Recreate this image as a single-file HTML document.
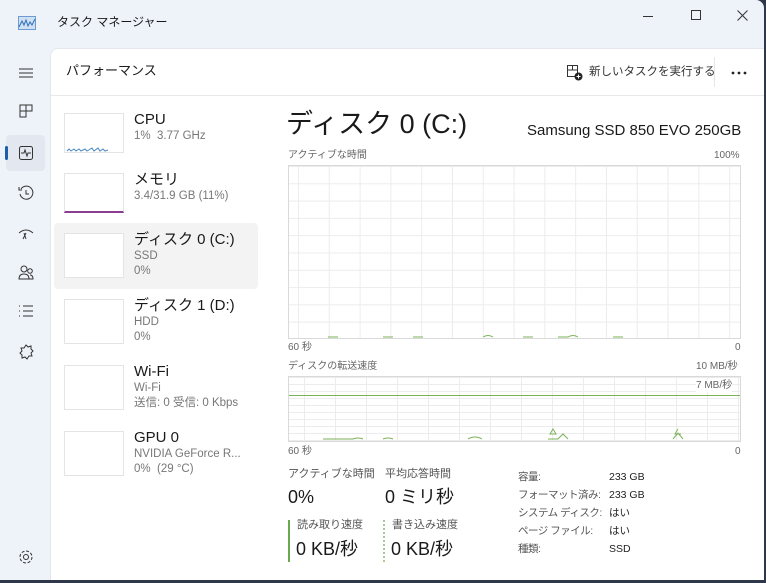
<!DOCTYPE html><html><head><meta charset="utf-8"><style>
*{margin:0;padding:0;box-sizing:border-box}
body{width:766px;height:583px;background:#2e3848;font-family:"Liberation Sans","Noto Sans CJK JP",sans-serif;color:#1a1a1a;position:relative;overflow:hidden}
.win{position:absolute;left:0;top:0;width:764px;height:580px;background:#eef2f9;border-radius:0 8px 8px 0;overflow:hidden}
.panel{position:absolute;left:50px;top:48px;width:714px;height:532px;background:#fff;border-radius:8px 0 0 0;border-left:1px solid #e3e6ec;border-top:1px solid #e3e6ec}
.a{position:absolute;white-space:nowrap;line-height:1.15}
.th{position:absolute;width:60px;height:40px;border:1px solid #e4e4e4;background:#fff}
.t1{font-size:15px}
.t2{font-size:11.5px;color:#777}
.ico{position:absolute;left:17px;width:18px;height:18px}
.g{position:absolute;border:1px solid #d9d9d9;background-image:linear-gradient(#ececec 1px,transparent 1px),linear-gradient(90deg,#ececec 1px,transparent 1px)}
.lbl{font-size:10px;color:#666}
.k{font-size:11px;color:#555}
.k2{font-size:10.5px;color:#555}
</style></head><body>
<div class="win">
<svg class="a" style="left:18px;top:16px" width="18" height="14"><rect x="0.5" y="0.5" width="17" height="13" fill="#cfe0f3" stroke="#6b9bd1"/><path d="M1 11 L4 5 L6 9 L8 4 L10 10 L12 6 L14 9 L17 3" stroke="#2f6fb8" fill="none"/></svg>
<div class="a" style="left:57px;top:16px;font-size:12px">タスク マネージャー</div>
<div class="a" style="left:643px;top:16px;width:10px;border-top:1px solid #333"></div>
<div class="a" style="left:691px;top:10px;width:10px;height:10px;border:1px solid #333"></div>
<svg class="a" style="left:737px;top:10px" width="11" height="11"><path d="M0.5 0.5l10 10M10.5 0.5l-10 10" stroke="#333"/></svg>
<svg class="ico" style="top:64px"><path d="M2 5h14M2 9h14M2 13h14" stroke="#333"/></svg>
<svg class="ico" style="top:102px"><path d="M3 3h6v12H3zM9 3h6v6H9zM3 9h6" stroke="#333" fill="none"/></svg>
<div class="a" style="left:6px;top:135px;width:39px;height:36px;background:#e3e7ef;border-radius:4px"></div>
<div class="a" style="left:5px;top:146px;width:3px;height:14px;background:#1d5fa8;border-radius:2px"></div>
<svg class="ico" style="top:144px"><rect x="2.5" y="2.5" width="13" height="13" rx="2" stroke="#333" fill="none"/><path d="M4 9h3l1-3 2 6 1-3h3" stroke="#333" fill="none"/></svg>
<svg class="ico" style="top:184px"><path d="M4 5A6.5 6.5 0 1 1 3 10" stroke="#333" fill="none"/><path d="M9 6v4h3M2 3v3h3" stroke="#333" fill="none"/></svg>
<svg class="ico" style="top:224px"><path d="M2 9q7-6 14 0M9 9l-3 6M7 9l2 6" stroke="#333" fill="none"/></svg>
<svg class="ico" style="top:263px"><circle cx="7" cy="6" r="3" stroke="#333" fill="none"/><circle cx="13" cy="8" r="2.3" stroke="#333" fill="none"/><path d="M2 16q0-5 5-5t5 5zM11 16h5q0-4-3-4" stroke="#333" fill="none"/></svg>
<svg class="ico" style="top:302px"><path d="M6 4h10M6 9h10M6 14h10M2 4h1M2 9h1M2 14h1" stroke="#333"/></svg>
<svg class="ico" style="top:343px"><path d="M9 2l2 2 3-1 0 3 2 2-2 2 1 3-3 0-2 3-2-2-3 1 0-3-2-2 2-2-1-3 3 0z" stroke="#333" fill="none"/></svg>
<svg class="ico" style="top:548px"><circle cx="9" cy="9" r="2.5" stroke="#333" fill="none"/><circle cx="9" cy="9" r="6" stroke="#333" fill="none" stroke-dasharray="3 1.7"/></svg>
</div>
<div class="panel"></div>
<div class="a" style="left:66px;top:64px;font-size:13px">パフォーマンス</div>
<div class="a" style="left:50px;top:95px;width:714px;border-top:1px solid #e8e8e8"></div>
<svg class="a" style="left:567px;top:65px" width="16" height="16"><rect x="0.5" y="0.5" width="10" height="11" stroke="#333" fill="none"/><path d="M0.5 5h10M5.5 0.5v5" stroke="#333"/><circle cx="11.5" cy="11.5" r="4" fill="#222"/><path d="M11.5 9.5v4M9.5 11.5h4" stroke="#fff"/></svg>
<div class="a" style="left:589px;top:66px;font-size:11.5px;color:#333">新しいタスクを実行する</div>
<div class="a" style="left:714px;top:57px;height:30px;border-left:1px solid #e5e5e5"></div>
<svg class="a" style="left:731px;top:71px" width="18" height="4"><circle cx="2" cy="2" r="1.4" fill="#222"/><circle cx="8" cy="2" r="1.4" fill="#222"/><circle cx="14" cy="2" r="1.4" fill="#222"/></svg>
<div class="a" style="left:54px;top:223px;width:204px;height:66px;background:#f3f3f3;border-radius:4px"></div>
<div class="th" style="left:64px;top:113px"><svg width="58" height="38"><path d="M2 37l2-2 2 2 3-2 2 2 3-2 2 2 4-2 2 2 5-3 2 3 4-3 2 3 3-2 2 2 3-1" stroke="#4a8ac4" fill="none"/></svg></div>
<div class="a t1" style="left:134px;top:111px">CPU</div><div class="a t2" style="left:134px;top:130px">1%&nbsp; 3.77 GHz</div>
<div class="th" style="left:64px;top:173px;border-bottom:2px solid #8b3d8f"></div>
<div class="a t1" style="left:134px;top:171px">メモリ</div><div class="a t2" style="left:134px;top:190px">3.4/31.9 GB (11%)</div>
<div class="th" style="left:64px;top:233px;height:45px"></div>
<div class="a t1" style="left:134px;top:231px">ディスク 0 (C:)</div><div class="a t2" style="left:134px;top:250px">SSD</div><div class="a t2" style="left:134px;top:265px">0%</div>
<div class="th" style="left:64px;top:299px;height:45px"></div>
<div class="a t1" style="left:134px;top:297px">ディスク 1 (D:)</div><div class="a t2" style="left:134px;top:316px">HDD</div><div class="a t2" style="left:134px;top:331px">0%</div>
<div class="th" style="left:64px;top:365px;height:45px"></div>
<div class="a t1" style="left:134px;top:363px">Wi-Fi</div><div class="a t2" style="left:134px;top:382px">Wi-Fi</div><div class="a t2" style="left:134px;top:397px">送信: 0 受信: 0 Kbps</div>
<div class="th" style="left:64px;top:431px;height:45px"></div>
<div class="a t1" style="left:134px;top:429px">GPU 0</div><div class="a t2" style="left:134px;top:448px">NVIDIA GeForce R...</div><div class="a t2" style="left:134px;top:463px">0%&nbsp; (29 °C)</div>
<div class="a" style="left:286px;top:109px;font-size:27px">ディスク 0 (C:)</div>
<div class="a" style="left:527px;top:122px;font-size:15px">Samsung SSD 850 EVO 250GB</div>
<div class="a lbl" style="left:288px;top:150px">アクティブな時間</div>
<div class="a lbl" style="left:714px;top:150px">100%</div>
<div class="g" style="left:288px;top:165px;width:453px;height:174px;background-size:100% 17.3px,30.8px 100%;background-position:0 0,9px 0"></div>
<svg class="a" style="left:288px;top:330px" width="453" height="10"><path d="M40 7h10M95 7h10M125 7h10M195 7q5-3 10 0M235 7h10M270 7h10q5-3 10 0M325 7h10" stroke="#7bb35a" fill="none"/></svg>
<div class="a lbl" style="left:288px;top:342px">60 秒</div><div class="a lbl" style="left:735px;top:342px">0</div>
<div class="a lbl" style="left:288px;top:361px">ディスクの転送速度</div>
<div class="a lbl" style="left:696px;top:361px">10 MB/秒</div>
<div class="g" style="left:288px;top:376px;width:453px;height:66px;background-size:100% 7px,31px 100%;background-position:0 0,15px 0"></div>
<div class="a lbl" style="left:696px;top:380px;background:#fff">7 MB/秒</div>
<div class="a" style="left:289px;top:395px;width:451px;border-top:1px solid #7bb35a"></div>
<svg class="a" style="left:288px;top:425px" width="453" height="16"><path d="M35 14h30q5-2 10 0M95 14q5-2 10 0M180 14q7-4 14 0M260 14h10l5-5 5 5M265 4l-3 5h6zM385 14l5-6 5 6M390 4l-3 5h6" stroke="#7bb35a" fill="none"/></svg>
<div class="a lbl" style="left:288px;top:446px">60 秒</div><div class="a lbl" style="left:735px;top:446px">0</div>
<div class="a k" style="left:288px;top:468px">アクティブな時間</div>
<div class="a k" style="left:385px;top:468px">平均応答時間</div>
<div class="a" style="left:288px;top:487px;font-size:18px">0%</div>
<div class="a" style="left:385px;top:487px;font-size:18px">0 ミリ秒</div>
<div class="a" style="left:288px;top:520px;height:42px;border-left:2px solid #6aa84f"></div>
<div class="a" style="left:383px;top:520px;height:42px;border-left:2px dotted #a7c98e"></div>
<div class="a k" style="left:297px;top:519px">読み取り速度</div>
<div class="a k" style="left:392px;top:519px">書き込み速度</div>
<div class="a" style="left:296px;top:539px;font-size:18px">0 KB/秒</div>
<div class="a" style="left:391px;top:539px;font-size:18px">0 KB/秒</div>
<div class="a k2" style="left:518px;top:468px;line-height:18px;letter-spacing:-0.5px">容量:<br>フォーマット済み:<br>システム ディスク:<br>ページ ファイル:<br>種類:</div>
<div class="a k2" style="left:609px;top:468px;line-height:18px;color:#222">233 GB<br>233 GB<br>はい<br>はい<br>SSD</div>
</body></html>
